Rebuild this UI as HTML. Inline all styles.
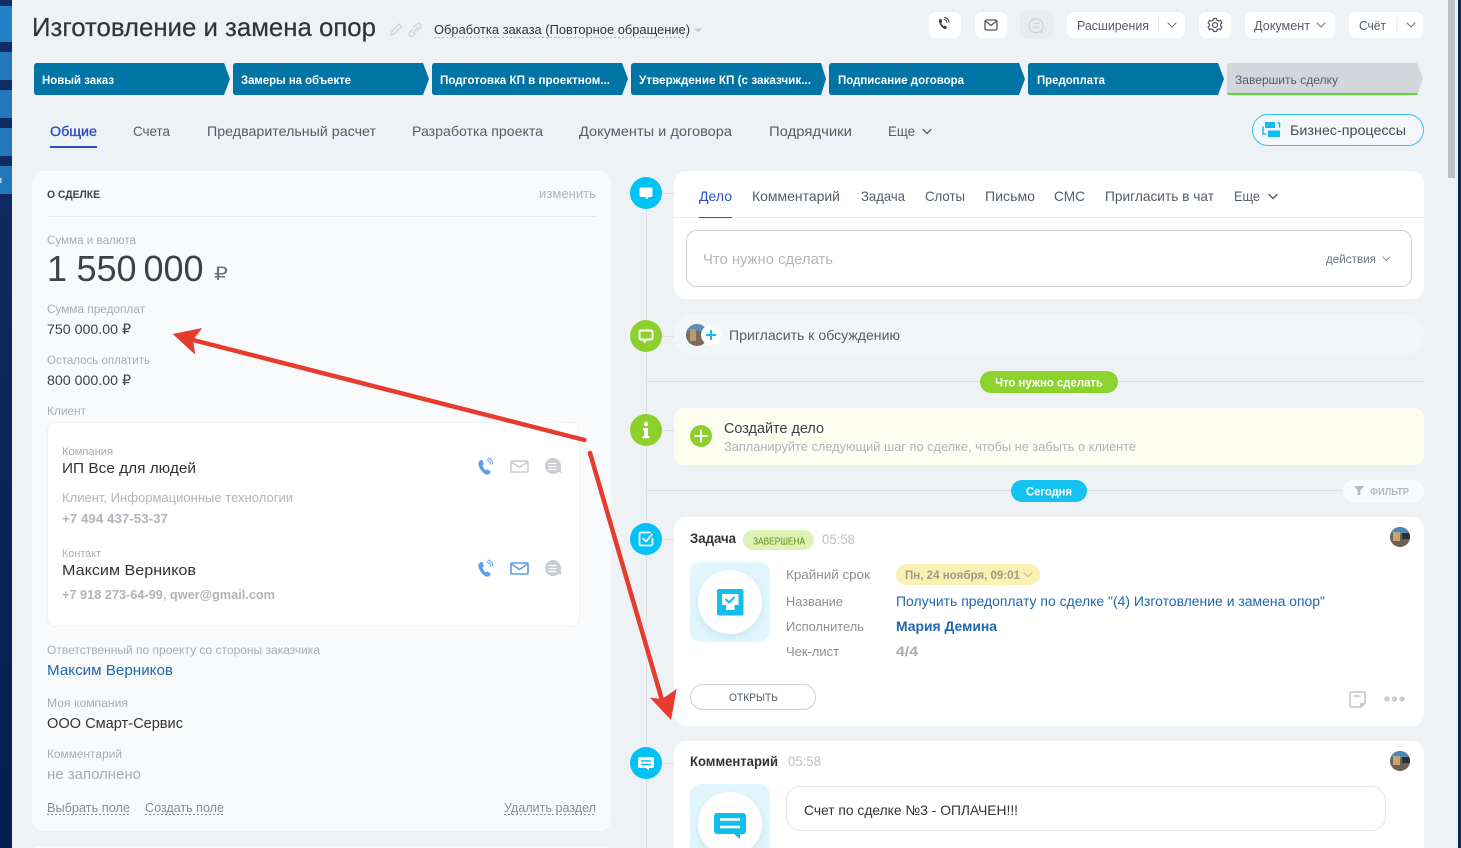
<!DOCTYPE html>
<html lang="ru"><head><meta charset="utf-8"><title>Сделка</title>
<style>
html,body{margin:0;padding:0;width:1461px;height:848px;overflow:hidden;background:#eef2f4}
svg{display:block;font-family:"Liberation Sans","DejaVu Sans",sans-serif}
.l{font-size:11.5px;fill:#a8adb4}
.v{font-size:15px;fill:#333}
.tab{font-size:14px;fill:#535c69}
.st{font-size:12px;font-weight:700;fill:#fff}
.ic{fill:none;stroke-linecap:round;stroke-linejoin:round}
</style></head><body>
<svg width="1461" height="848" viewBox="0 0 1461 848" xmlns="http://www.w3.org/2000/svg">
<defs>
<linearGradient id="nav" x1="0" y1="0" x2="0" y2="1"><stop offset="0" stop-color="#132c68"/><stop offset="1" stop-color="#031f50"/></linearGradient>
<clipPath id="a1"><circle cx="697" cy="335" r="11"/></clipPath>
<clipPath id="a2"><circle cx="1400" cy="537" r="10"/></clipPath>
<clipPath id="a3"><circle cx="1400" cy="761" r="10"/></clipPath>
<clipPath id="cmt"><rect x="674" y="741" width="750" height="107"/></clipPath>
<filter id="sh" x="-30%" y="-30%" width="160%" height="160%"><feDropShadow dx="0" dy="3" stdDeviation="4" flood-color="#9fc6d3" flood-opacity=".35"/></filter>
</defs>
<rect width="1461" height="848" fill="#eef2f4"/>
<!-- left sidebar -->
<rect width="12" height="848" fill="url(#nav)"/>
<rect y="6" width="12" height="36" fill="#2282c9"/>
<rect y="52" width="12" height="28" fill="#2378bd"/>
<rect y="90" width="12" height="28" fill="#2378bd"/>
<rect y="128" width="12" height="28" fill="#2378bd"/>
<rect y="166" width="12" height="28" fill="#2378bd"/>
<rect y="178" width="1.500" height="5" fill="#b9d6ee"/>
<!-- right edge / scroll -->
<rect x="1448" y="0" width="7" height="178" fill="#bcc0c3"/>
<rect x="1458" y="0" width="3" height="848" fill="#0b2658"/>

<!-- header -->
<text x="32" y="36" font-size="26" fill="#333" stroke="#333" stroke-width=".2" textLength="344" lengthAdjust="spacingAndGlyphs">Изготовление и замена опор</text>
<g class="ic" stroke="#cfd3d7" stroke-width="1.300">
<path d="M391 35l1-4 7-7 2.500 2.500-7 7z"/>
<path d="M414 27l3-3a2.500 2.500 0 0 1 3.500 3.500l-3 3M416 33l-3 3a2.500 2.500 0 0 1-3.500-3.500l3-3M413 33l5-6"/>
</g>
<text x="434" y="34" font-size="13" fill="#333" textLength="256" lengthAdjust="spacingAndGlyphs">Обработка заказа (Повторное обращение)</text>
<line x1="434" y1="37.500" x2="690" y2="37.500" stroke="#b5b9be" stroke-dasharray="2 2"/>
<path d="M694 28.500h8l-4 4z" fill="#c8ccd0"/>

<!-- header buttons -->
<g fill="#fff">
<rect x="929" y="12" width="32" height="26" rx="7"/>
<rect x="975" y="12" width="32" height="26" rx="7"/>
<rect x="1067" y="12" width="118" height="26" rx="7"/>
<rect x="1199" y="12" width="32" height="26" rx="7"/>
<rect x="1245" y="12" width="90" height="26" rx="7"/>
<rect x="1349" y="12" width="74" height="26" rx="7"/>
</g>
<rect x="1020" y="11" width="33" height="28" rx="8" fill="#e9ecee"/>
<path d="M940 19c-1 .5-1.500 1.500-1 3 .8 2.500 2.500 5 4.500 6.500 1.200.8 2.300.6 3-.3l.6-1-2.400-1.800-1 .8c-1-.7-2-2.300-2.500-3.700l1.100-.7-1-2.900z" fill="#3a434f"/>
<path class="ic" stroke="#3a434f" stroke-width="1" d="M944 19.500a3.500 3.500 0 0 1 3 3M944.500 17.500a5.500 5.500 0 0 1 4.500 4.500"/>
<g class="ic" stroke="#4c5560" stroke-width="1.300"><rect x="985" y="20" width="12" height="10" rx="1.500"/><path d="M985.500 21l5.500 4.500 5.500-4.500"/></g>
<path class="ic" stroke="#cfd3d6" stroke-width="1.300" d="M1040 31.500l2 1.500-.4-3a7 7 0 1 0-1.600 1.500z"/>
<path class="ic" stroke="#cfd3d6" d="M1033.500 23.500h6M1033.500 27h6"/>
<text x="1077" y="30" font-size="12.500" fill="#535c69" textLength="72" lengthAdjust="spacingAndGlyphs">Расширения</text>
<line x1="1158.500" y1="17" x2="1158.500" y2="33" stroke="#e6e8ea"/>
<path class="ic" stroke="#6a737f" d="M1168 23l4 4 4-4"/>
<g class="ic" stroke="#535c69" stroke-width="1.200"><circle cx="1215" cy="25" r="2.500"/><path d="M1213.500 18.500h3l.5 1.800 1.800.8 1.700-.8 1.500 2.600-1.400 1.200v1.800l1.400 1.200-1.500 2.600-1.700-.8-1.800.8-.5 1.800h-3l-.5-1.800-1.800-.8-1.700.8-1.500-2.600 1.400-1.200v-1.800l-1.400-1.200 1.500-2.600 1.700.8 1.800-.8z"/></g>
<text x="1254" y="30" font-size="12.500" fill="#535c69" textLength="56" lengthAdjust="spacingAndGlyphs">Документ</text>
<path class="ic" stroke="#6a737f" d="M1317 23l4 4 4-4"/>
<text x="1359" y="30" font-size="12.500" fill="#535c69" textLength="27" lengthAdjust="spacingAndGlyphs">Счёт</text>
<line x1="1397" y1="17" x2="1397" y2="33" stroke="#e6e8ea"/>
<path class="ic" stroke="#6a737f" d="M1407 23l4 4 4-4"/>

<!-- stages -->
<g fill="#0074a4">
<path d="M37 63H224L230 79L224 95H37Q34 95 34 92V66Q34 63 37 63Z"/>
<path d="M236 63H423L429 79L423 95H236Q233 95 233 92V66Q233 63 236 63Z"/>
<path d="M435 63H622L628 79L622 95H435Q432 95 432 92V66Q432 63 435 63Z"/>
<path d="M634 63H821L826 79L821 95H634Q631 95 631 92V66Q631 63 634 63Z"/>
<path d="M832 63H1019L1025 79L1019 95H832Q829 95 829 92V66Q829 63 832 63Z"/>
<path d="M1031 63H1218L1224 79L1218 95H1031Q1028 95 1028 92V66Q1028 63 1031 63Z"/>
</g>
<path d="M1230 63H1417L1423 79L1417 95H1230Q1227 95 1227 92V66Q1227 63 1230 63Z" fill="#d3d6da"/>
<path d="M1227 93H1418L1417 95H1230Q1227 95 1227 93Z" fill="#5ed335"/>
<text class="st" x="42" y="84" textLength="72" lengthAdjust="spacingAndGlyphs">Новый заказ</text>
<text class="st" x="241" y="84" textLength="110" lengthAdjust="spacingAndGlyphs">Замеры на объекте</text>
<text class="st" x="440" y="84" textLength="170" lengthAdjust="spacingAndGlyphs">Подготовка КП в проектном...</text>
<text class="st" x="639" y="84" textLength="172" lengthAdjust="spacingAndGlyphs">Утверждение КП (с заказчик...</text>
<text class="st" x="838" y="84" textLength="126" lengthAdjust="spacingAndGlyphs">Подписание договора</text>
<text class="st" x="1037" y="84" textLength="68" lengthAdjust="spacingAndGlyphs">Предоплата</text>
<text x="1235" y="84" font-size="12" fill="#535c69" textLength="103" lengthAdjust="spacingAndGlyphs">Завершить сделку</text>

<!-- top tabs -->
<text x="50" y="136" font-size="14" fill="#2a4fc4" stroke="#2a4fc4" stroke-width=".35" textLength="47" lengthAdjust="spacingAndGlyphs">Общие</text>
<rect x="50" y="146" width="47" height="2" fill="#2a4fc4"/>
<text class="tab" x="133" y="136" textLength="37" lengthAdjust="spacingAndGlyphs">Счета</text>
<text class="tab" x="207" y="136" textLength="169" lengthAdjust="spacingAndGlyphs">Предварительный расчет</text>
<text class="tab" x="412" y="136" textLength="131" lengthAdjust="spacingAndGlyphs">Разработка проекта</text>
<text class="tab" x="579" y="136" textLength="153" lengthAdjust="spacingAndGlyphs">Документы и договора</text>
<text class="tab" x="769" y="136" textLength="83" lengthAdjust="spacingAndGlyphs">Подрядчики</text>
<text class="tab" x="888" y="136" textLength="27" lengthAdjust="spacingAndGlyphs">Еще</text>
<path class="ic" stroke="#535c69" stroke-width="1.300" d="M923 129.500l4 4 4-4"/>
<rect x="1252.500" y="114.500" width="171" height="31" rx="15.500" fill="#f4f7f9" stroke="#2fc6f6"/>
<g fill="#12bdec"><rect x="1265" y="122" width="10" height="6"/><rect x="1268" y="130.500" width="12" height="6.500"/></g>
<path class="ic" stroke="#12bdec" stroke-width="1.500" d="M1263 127v7h2.500M1278 123h1.500v4"/>
<text x="1290" y="135" font-size="13.500" fill="#444c57" textLength="116" lengthAdjust="spacingAndGlyphs">Бизнес-процессы</text>

<!-- left card -->
<rect x="32" y="171" width="579" height="660" rx="12" fill="#f9fafb"/>
<rect x="32" y="846" width="579" height="12" rx="8" fill="#f9fafb"/>
<text x="47" y="198" font-size="11" font-weight="700" fill="#3d444d" textLength="53" lengthAdjust="spacingAndGlyphs">О СДЕЛКЕ</text>
<text x="539" y="198" font-size="12.500" fill="#b0b4b9" textLength="57" lengthAdjust="spacingAndGlyphs">изменить</text>
<line x1="47" y1="216.500" x2="596" y2="216.500" stroke="#e8eaed"/>
<text class="l" x="47" y="244" textLength="89" lengthAdjust="spacingAndGlyphs">Сумма и валюта</text>
<text y="281" font-size="36" fill="#3a424c"><tspan x="47">1</tspan><tspan x="76.500">550</tspan><tspan x="143.500">000</tspan></text>
<text x="214" y="280" font-size="19" fill="#6a737f" textLength="14" lengthAdjust="spacingAndGlyphs">₽</text>
<text class="l" x="47" y="313" textLength="98" lengthAdjust="spacingAndGlyphs">Сумма предоплат</text>
<text x="47" y="334" font-size="14" fill="#3a424c" textLength="84" lengthAdjust="spacingAndGlyphs">750 000.00 ₽</text>
<text class="l" x="47" y="364" textLength="103" lengthAdjust="spacingAndGlyphs">Осталось оплатить</text>
<text x="47" y="385" font-size="14" fill="#3a424c" textLength="84" lengthAdjust="spacingAndGlyphs">800 000.00 ₽</text>
<text class="l" x="47" y="415" textLength="39" lengthAdjust="spacingAndGlyphs">Клиент</text>

<rect x="47.500" y="422.500" width="532" height="204" rx="8" fill="#fff" stroke="#eff1f3"/>
<text x="62" y="455" font-size="11" fill="#a8adb4" textLength="51" lengthAdjust="spacingAndGlyphs">Компания</text>
<text class="v" x="62" y="473" textLength="134" lengthAdjust="spacingAndGlyphs">ИП Все для людей</text>
<text x="62" y="502" font-size="13" fill="#b0b4b9" textLength="231" lengthAdjust="spacingAndGlyphs">Клиент, Информационные технологии</text>
<text x="62" y="523" font-size="12.500" font-weight="700" fill="#b0b4b9" textLength="106" lengthAdjust="spacingAndGlyphs">+7 494 437-53-37</text>
<text x="62" y="557" font-size="11" fill="#a8adb4" textLength="39" lengthAdjust="spacingAndGlyphs">Контакт</text>
<text class="v" x="62" y="575" textLength="134" lengthAdjust="spacingAndGlyphs">Максим Верников</text>
<text x="62" y="599" font-size="12.500" font-weight="700" fill="#b0b4b9" textLength="213" lengthAdjust="spacingAndGlyphs">+7 918 273-64-99, qwer@gmail.com</text>
<!-- client icons row 1 -->
<g>
<path d="M481 460c-2 1-3 2.500-2.500 5 1 3.500 3.500 7 6.500 9 1.800 1.200 3.500.8 5-.8l.8-1.400-3.600-2.600-1.400 1.200c-1.500-1-2.800-3-3.400-5l1.500-1.200-1.400-4.200z" fill="#5d9ce8"/>
<path class="ic" stroke="#5d9ce8" d="M487 460a5 5 0 0 1 4 4.500M488 458a7 7 0 0 1 5 6"/>
<g class="ic" stroke="#c9ccd1" stroke-width="1.500"><rect x="511" y="461" width="17" height="11" rx="1"/><path d="M511.500 462l8 5.500 8-5.500"/></g>
<circle cx="553" cy="466" r="8" fill="#c9ccd1"/><path d="M557 471l4.500 2-1-5z" fill="#c9ccd1"/>
<path class="ic" stroke="#fff" stroke-width="1.200" d="M549 463.500h7M549 466.500h7M549 469.500h7"/>
</g>
<g>
<path d="M481 562c-2 1-3 2.500-2.500 5 1 3.500 3.500 7 6.500 9 1.800 1.200 3.500.8 5-.8l.8-1.400-3.600-2.600-1.400 1.200c-1.500-1-2.800-3-3.400-5l1.500-1.200-1.400-4.200z" fill="#5d9ce8"/>
<path class="ic" stroke="#5d9ce8" d="M487 562a5 5 0 0 1 4 4.500M488 560a7 7 0 0 1 5 6"/>
<g class="ic" stroke="#5d9ce8" stroke-width="1.600"><rect x="511" y="563" width="17" height="11" rx="1"/><path d="M511.500 564l8 5.500 8-5.500"/></g>
<circle cx="553" cy="568" r="8" fill="#c9ccd1"/><path d="M557 573l4.500 2-1-5z" fill="#c9ccd1"/>
<path class="ic" stroke="#fff" stroke-width="1.200" d="M549 565.500h7M549 568.500h7M549 571.500h7"/>
</g>
<text class="l" x="47" y="654" textLength="273" lengthAdjust="spacingAndGlyphs">Ответственный по проекту со стороны заказчика</text>
<text x="47" y="675" font-size="15" fill="#2067b0" textLength="126" lengthAdjust="spacingAndGlyphs">Максим Верников</text>
<text class="l" x="47" y="707" textLength="81" lengthAdjust="spacingAndGlyphs">Моя компания</text>
<text class="v" x="47" y="728" textLength="136" lengthAdjust="spacingAndGlyphs">ООО Смарт-Сервис</text>
<text class="l" x="47" y="758" textLength="75" lengthAdjust="spacingAndGlyphs">Комментарий</text>
<text x="47" y="779" font-size="15" fill="#a8adb4" textLength="94" lengthAdjust="spacingAndGlyphs">не заполнено</text>
<text x="47" y="812" font-size="13" fill="#868d95" textLength="83" lengthAdjust="spacingAndGlyphs">Выбрать поле</text>
<text x="145" y="812" font-size="13" fill="#868d95" textLength="79" lengthAdjust="spacingAndGlyphs">Создать поле</text>
<text x="504" y="812" font-size="13" fill="#868d95" textLength="92" lengthAdjust="spacingAndGlyphs">Удалить раздел</text>
<g stroke="#868d95" stroke-dasharray="2 2"><line x1="47" y1="814.500" x2="130" y2="814.500"/><line x1="145" y1="814.500" x2="224" y2="814.500"/><line x1="504" y1="814.500" x2="596" y2="814.500"/></g>

<!-- timeline -->
<line x1="646.500" y1="190" x2="646.500" y2="848" stroke="#dde1e5"/>
<g stroke="#dde1e5"><line x1="646" y1="193.500" x2="674" y2="193.500"/><line x1="646" y1="336.500" x2="674" y2="336.500"/><line x1="646" y1="430.500" x2="674" y2="430.500"/><line x1="646" y1="539.500" x2="674" y2="539.500"/><line x1="646" y1="763.500" x2="674" y2="763.500"/><line x1="647" y1="381.500" x2="1424" y2="381.500"/><line x1="647" y1="490.500" x2="1424" y2="490.500"/></g>
<circle cx="646" cy="193" r="16" fill="#00c2f4"/>
<path d="M641 187.500h10a1.500 1.500 0 0 1 1.500 1.500v6.500a1.500 1.500 0 0 1-1.500 1.500h-2.500l-1.500 2.500-1.500-2.500h-4.500a1.500 1.500 0 0 1-1.500-1.500V189a1.500 1.500 0 0 1 1.500-1.500z" fill="#fff"/>
<circle cx="646" cy="336" r="16" fill="#8dd02e"/>
<path class="ic" stroke="#fff" stroke-width="2" d="M641 330.500h10a1.500 1.500 0 0 1 1.500 1.500v6a1.500 1.500 0 0 1-1.500 1.500h-4.500l-2 2.500-.5-2.500h-3a1.500 1.500 0 0 1-1.500-1.500v-6a1.500 1.500 0 0 1 1.500-1.500z"/>
<circle cx="646" cy="430" r="16" fill="#8dd02e"/>
<g fill="#fff"><circle cx="646" cy="424" r="2.200"/><path d="M643 428h5v8h1.500v2.200h-7V436h1.500v-5.800H643z"/></g>
<circle cx="646" cy="539" r="16" fill="#00c2f4"/>
<g class="ic" stroke="#fff" stroke-width="1.800"><path d="M652.500 539v5a1.500 1.500 0 0 1-1.500 1.500h-10a1.500 1.500 0 0 1-1.500-1.500v-10a1.500 1.500 0 0 1 1.500-1.500h9"/><path d="M643 538.500l3 3 6-7"/></g>
<circle cx="646" cy="763" r="16" fill="#00c2f4"/>
<path d="M640 757h12a2 2 0 0 1 2 2v7a2 2 0 0 1-2 2h-3v2.500l-3-2.500h-6a2 2 0 0 1-2-2v-7a2 2 0 0 1 2-2z" fill="#fff"/>
<path stroke="#00c2f4" stroke-width="1.600" d="M641 761h10M641 764.500h10"/>

<!-- editor -->
<rect x="674" y="171" width="750" height="128" rx="12" fill="#fff"/>
<line x1="674" y1="217.500" x2="1424" y2="217.500" stroke="#e8eaec"/>
<rect x="699" y="217" width="33" height="1" fill="#2a4fc4"/>
<text x="699" y="201" font-size="14" fill="#2a4fc4" textLength="33" lengthAdjust="spacingAndGlyphs">Дело</text>
<text class="tab" x="752" y="201" textLength="88" lengthAdjust="spacingAndGlyphs">Комментарий</text>
<text class="tab" x="861" y="201" textLength="44" lengthAdjust="spacingAndGlyphs">Задача</text>
<text class="tab" x="925" y="201" textLength="40" lengthAdjust="spacingAndGlyphs">Слоты</text>
<text class="tab" x="985" y="201" textLength="50" lengthAdjust="spacingAndGlyphs">Письмо</text>
<text class="tab" x="1054" y="201" textLength="31" lengthAdjust="spacingAndGlyphs">СМС</text>
<text class="tab" x="1105" y="201" textLength="109" lengthAdjust="spacingAndGlyphs">Пригласить в чат</text>
<text class="tab" x="1234" y="201" textLength="26" lengthAdjust="spacingAndGlyphs">Еще</text>
<path class="ic" stroke="#535c69" stroke-width="1.500" d="M1269 194.500l4 4 4-4"/>
<rect x="686.500" y="230.500" width="725" height="56" rx="10" fill="#fff" stroke="#c9ced3"/>
<text x="703" y="264" font-size="14.500" fill="#b4b8bd" textLength="130" lengthAdjust="spacingAndGlyphs">Что нужно сделать</text>
<text x="1326" y="263" font-size="11.500" fill="#6a737f" textLength="50" lengthAdjust="spacingAndGlyphs">действия</text>
<path class="ic" stroke="#8a9097" d="M1383 257l3.500 3.500 3.500-3.500"/>

<!-- invite -->
<rect x="674" y="314" width="750" height="42" rx="21" fill="#f3f6f8"/>
<g clip-path="url(#a1)"><rect x="686" y="324" width="22" height="22" fill="#7c6b55"/><rect x="686" y="324" width="22" height="7" fill="#5d8fb5"/><rect x="690" y="329" width="6" height="12" fill="#b59b73"/></g>
<circle cx="711" cy="335" r="10" fill="#fff"/>
<path stroke="#12bdec" stroke-width="2" d="M711 330v10M706 335h10"/>
<text x="729" y="340" font-size="14" fill="#535c69" textLength="171" lengthAdjust="spacingAndGlyphs">Пригласить к обсуждению</text>
<rect x="980" y="371" width="138" height="22" rx="11" fill="#8dd32e"/>
<text x="995" y="386.500" font-size="12" font-weight="700" fill="#fff" textLength="108" lengthAdjust="spacingAndGlyphs">Что нужно сделать</text>

<!-- create -->
<rect x="674" y="408" width="750" height="57" rx="10" fill="#fdfdf0"/>
<circle cx="701" cy="436" r="11" fill="#8dd02e"/>
<path stroke="#fff" stroke-width="2" d="M701 429.500v13M694.500 436h13"/>
<text x="724" y="433" font-size="14.500" fill="#3a424c" textLength="100" lengthAdjust="spacingAndGlyphs">Создайте дело</text>
<text x="724" y="451" font-size="12.500" fill="#b0b4b9" textLength="412" lengthAdjust="spacingAndGlyphs">Запланируйте следующий шаг по сделке, чтобы не забыть о клиенте</text>

<rect x="1011" y="480" width="76" height="22" rx="11" fill="#14c3f2"/>
<text x="1026" y="495.500" font-size="12" font-weight="700" fill="#fff" textLength="46" lengthAdjust="spacingAndGlyphs">Сегодня</text>
<rect x="1343" y="480" width="81" height="22" rx="11" fill="#f8fafb"/>
<path d="M1354 486h10l-3.700 4.500v4.500h-2.600v-4.500z" fill="#b6babf"/>
<text x="1370" y="495" font-size="10" font-weight="700" fill="#b6babf" textLength="39" lengthAdjust="spacingAndGlyphs">ФИЛЬТР</text>

<!-- task card -->
<rect x="674" y="517" width="750" height="209" rx="12" fill="#fff"/>
<text x="690" y="543" font-size="13.500" font-weight="700" fill="#333" textLength="46" lengthAdjust="spacingAndGlyphs">Задача</text>
<rect x="743" y="530" width="71" height="20" rx="10" fill="#dff2b5"/>
<text x="753" y="544.500" font-size="10" fill="#5c8c1a" textLength="52" lengthAdjust="spacingAndGlyphs">ЗАВЕРШЕНА</text>
<text x="822" y="544" font-size="13.500" fill="#bdc1c6" textLength="33" lengthAdjust="spacingAndGlyphs">05:58</text>
<rect x="690" y="562" width="80" height="80" rx="11" fill="#e1f6fc"/>
<circle cx="730" cy="602" r="32" fill="#fff" filter="url(#sh)"/>
<rect x="717" y="589" width="26.500" height="26.500" rx="2" fill="#12bdec"/>
<path d="M722 594h16.500v11h-4v5h-8.500v-5h-4z" fill="#fff"/>
<path class="ic" stroke="#12bdec" stroke-width="2" d="M726 599.500l3 3 5-5"/>
<g font-size="13" fill="#8a9097">
<text x="786" y="579" textLength="84" lengthAdjust="spacingAndGlyphs">Крайний срок</text>
<text x="786" y="606" textLength="57" lengthAdjust="spacingAndGlyphs">Название</text>
<text x="786" y="631" textLength="78" lengthAdjust="spacingAndGlyphs">Исполнитель</text>
<text x="786" y="656" textLength="53" lengthAdjust="spacingAndGlyphs">Чек-лист</text>
</g>
<rect x="896" y="564" width="144" height="21" rx="10.500" fill="#fcf0b3"/>
<text x="905" y="579" font-size="12" font-weight="700" fill="#9d9c85" textLength="115" lengthAdjust="spacingAndGlyphs">Пн, 24 ноября, 09:01</text>
<path class="ic" stroke="#c2c0a0" d="M1024 572.500l4 4 4-4"/>
<text x="896" y="606" font-size="13.500" fill="#2067b0" textLength="429" lengthAdjust="spacingAndGlyphs">Получить предоплату по сделке "(4) Изготовление и замена опор"</text>
<text x="896" y="631" font-size="13.500" font-weight="700" fill="#2067b0" textLength="101" lengthAdjust="spacingAndGlyphs">Мария Демина</text>
<text x="896" y="656" font-size="13.500" font-weight="700" fill="#a8adb4" textLength="22" lengthAdjust="spacingAndGlyphs">4/4</text>
<rect x="690.500" y="684.500" width="125" height="25" rx="12.500" fill="#fff" stroke="#c9ced3"/>
<text x="729" y="701" font-size="11" fill="#535c69" textLength="49" lengthAdjust="spacingAndGlyphs">ОТКРЫТЬ</text>
<g clip-path="url(#a2)"><rect x="1390" y="527" width="20" height="20" fill="#6f6250"/><rect x="1390" y="527" width="20" height="7" fill="#4f88b8"/><rect x="1393" y="532" width="7" height="9" fill="#c4a679"/><rect x="1402" y="533" width="8" height="6" fill="#2c2f33"/></g>
<g class="ic" stroke="#c9cdd2" stroke-width="1.800"><path d="M1365 703v-9.500a1.500 1.500 0 0 0-1.500-1.500h-12a1.500 1.500 0 0 0-1.500 1.500v12a1.500 1.500 0 0 0 1.500 1.500h9.500zM1354 696h6"/></g>
<path d="M1360 707v-4h5z" fill="#c9cdd2"/>
<g fill="#c9cdd2"><circle cx="1387" cy="699" r="2.700"/><circle cx="1394.500" cy="699" r="2.700"/><circle cx="1402" cy="699" r="2.700"/></g>

<!-- comment card -->
<path d="M686 741H1412a12 12 0 0 1 12 12V848H674V753a12 12 0 0 1 12-12z" fill="#fff"/>
<text x="690" y="766" font-size="13.500" font-weight="700" fill="#333" textLength="88" lengthAdjust="spacingAndGlyphs">Комментарий</text>
<text x="788" y="766" font-size="13.500" fill="#bdc1c6" textLength="33" lengthAdjust="spacingAndGlyphs">05:58</text>
<g clip-path="url(#cmt)">
<rect x="690" y="784" width="80" height="80" rx="11" fill="#e1f6fc"/>
<circle cx="730" cy="824" r="32" fill="#fff" filter="url(#sh)"/>
<path d="M717 813h26a3 3 0 0 1 3 3v15a3 3 0 0 1-3 3h-3v5l-6-5h-17a3 3 0 0 1-3-3v-15a3 3 0 0 1 3-3z" fill="#12bdec"/>
<path stroke="#fff" stroke-width="2.500" d="M720 819.500h20M720 827h20"/>
</g>
<rect x="786.500" y="786.500" width="599" height="44" rx="14" fill="#fff" stroke="#e5e7ea"/>
<text x="804" y="815" font-size="14" fill="#333" textLength="214" lengthAdjust="spacingAndGlyphs">Счет по сделке №3 - ОПЛАЧЕН!!!</text>
<g clip-path="url(#a3)"><rect x="1390" y="751" width="20" height="20" fill="#6f6250"/><rect x="1390" y="751" width="20" height="7" fill="#4f88b8"/><rect x="1393" y="756" width="7" height="9" fill="#c4a679"/><rect x="1402" y="757" width="8" height="6" fill="#2c2f33"/></g>

<!-- red annotation arrows -->
<line x1="584.500" y1="440" x2="193" y2="340" stroke="#e63c2e" stroke-width="4.500" stroke-linecap="round"/>
<path d="M172.700 334L202.300 328L193 340L195.300 354.700Z" fill="#e63c2e"/>
<line x1="590" y1="453" x2="662" y2="700" stroke="#e63c2e" stroke-width="4.500" stroke-linecap="round"/>
<path d="M671 720L650 697.700L662 699L676.700 689Z" fill="#e63c2e"/>
</svg>
</body></html>
